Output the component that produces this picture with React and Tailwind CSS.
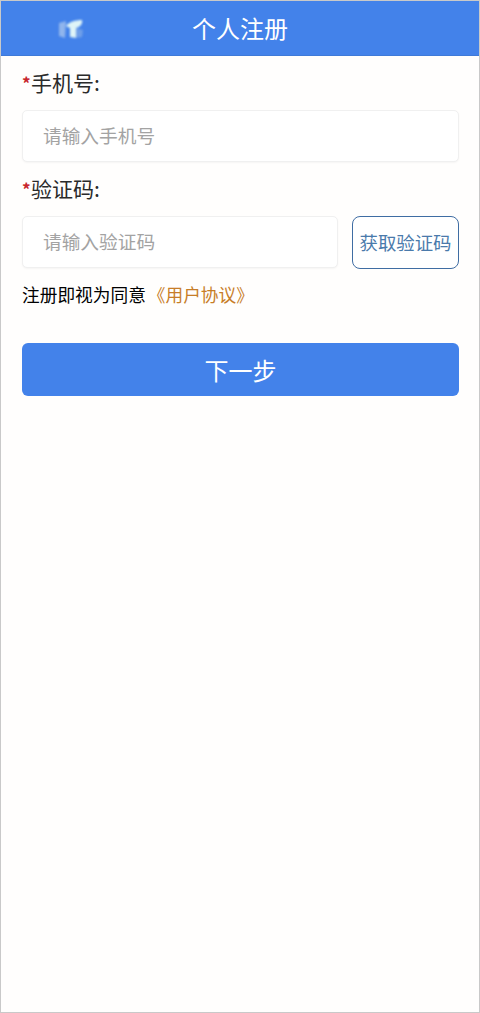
import React from 'react';

const cjk = 'font-["Noto_Sans_CJK_SC","Liberation_Sans",sans-serif]';

function Label({ children }) {
  return (
    <div className="flex items-center h-[28px] text-[21px] leading-[28px] text-[#2a2a2a]">
      <span className="text-[#c8252c] text-[17px] w-[9px] mt-[2px] font-bold">*</span>
      <span>{children}</span>
    </div>
  );
}

function Field({ placeholder, className }) {
  return (
    <input
      readOnly
      placeholder={placeholder}
      className={`h-[52px] rounded-[5px] border border-[#f0f0f0] bg-white pl-[20px] pb-[4px] text-[18.7px] outline-none shadow-[0_1px_2px_rgba(0,0,0,0.04)] placeholder:text-[#a3a3a3] ${className}`}
    />
  );
}

export default function App() {
  return (
    <div className={`${cjk} w-[480px] h-[1013px] bg-[#fffefd] border border-[#c9c9c9] flex flex-col`}>
      <header className="relative h-[55px] shrink-0 bg-[#4382ea] flex items-center justify-center border-b border-[#3f7ad8]">
        <svg className="absolute left-[55px] top-[16px] blur-[1px]" width="32" height="24" viewBox="0 0 32 24">
          <path d="M3 6 L10 4 L9 21 L3 19 Z" fill="#a9c6ee" opacity="0.75" />
          <path d="M10 9 C13 5 19 3 26 3 C27 7 24 10 20 11 L20 21 L14 20 L14 11 Z" fill="#dff4f7" />
          <path d="M20 11 L27 13 L26 20 L20 21 Z" fill="#7ba6e8" opacity="0.8" />
        </svg>
        <h1 className="text-[24px] font-normal text-white leading-none -mt-[1px]">个人注册</h1>
      </header>

      <main className="flex flex-col pl-[21px] pr-[20px]">
        <div className="mt-[12px] mb-[14px]">
          <Label>手机号:</Label>
        </div>
        <Field placeholder="请输入手机号" className="w-[437px]" />

        <div className="mt-[12px] mb-[14px]">
          <Label>验证码:</Label>
        </div>
        <div className="flex gap-[14px]">
          <Field placeholder="请输入验证码" className="w-[316px]" />
          <button className="w-[107px] h-[53px] rounded-[8px] border border-[#3f6da3] bg-white text-[18.4px] text-[#4a7aab] whitespace-nowrap">
            获取验证码
          </button>
        </div>

        <p className="mt-[12px] h-[26px] text-[17.7px] leading-[26px] text-black whitespace-nowrap">
          注册即视为同意 <span className="text-[#c77d28] -ml-[2px]">《用户协议》</span>
        </p>

        <button className="mt-[36px] w-[437px] h-[53px] rounded-[6px] bg-[#4382ea] text-[24px] text-white">
          下一步
        </button>
      </main>
    </div>
  );
}
